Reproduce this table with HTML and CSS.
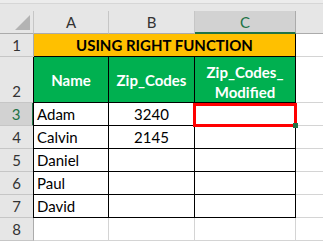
FILE: index.html
```html
<!DOCTYPE html>
<html>
<head>
<meta charset="utf-8">
<link rel="stylesheet" href="styles.css">
</head>
<body>
<div class="sheet">
  <div class="topbar"></div>

  <div class="corner"><span class="tri"></span></div>
  <div class="ch">A</div>
  <div class="ch">B</div>
  <div class="ch sel">C</div>
  <div class="ch"></div>

  <div class="rh">1</div>
  <div class="title">USING RIGHT FUNCTION</div>
  <div class="cell"></div>

  <div class="rh bottom">2</div>
  <div class="hd first">Name</div>
  <div class="hd">Zip_Codes</div>
  <div class="hd wrap">Zip_Codes_<br>Modified</div>
  <div class="cell"></div>

  <div class="rh sel">3</div>
  <div class="td first">Adam</div>
  <div class="td num">3240</div>
  <div class="td active"><span class="selbox"></span><span class="handle"></span></div>
  <div class="cell"></div>

  <div class="rh">4</div>
  <div class="td first">Calvin</div>
  <div class="td num">2145</div>
  <div class="td"></div>
  <div class="cell"></div>

  <div class="rh">5</div>
  <div class="td first">Daniel</div>
  <div class="td num"></div>
  <div class="td"></div>
  <div class="cell"></div>

  <div class="rh">6</div>
  <div class="td first">Paul</div>
  <div class="td num"></div>
  <div class="td"></div>
  <div class="cell"></div>

  <div class="rh">7</div>
  <div class="td first">David</div>
  <div class="td num"></div>
  <div class="td"></div>
  <div class="cell"></div>

  <div class="rh">8</div>
  <div class="cell"></div>
  <div class="cell"></div>
  <div class="cell"></div>
  <div class="cell"></div>
</div>
</body>
</html>
```

FILE: styles.css
```css
* { box-sizing: border-box; }
html, body { margin: 0; padding: 0; background: #ffffff; }
body { width: 323px; height: 242px; overflow: hidden; }

.sheet {
  display: grid;
  grid-template-columns: 34px 75px 86px 101px 28px;
  grid-template-rows: 11px 23px 23px 46px repeat(6, 23px);
  font-family: Lato, "Noto Sans", sans-serif;
  font-size: 15px;
  color: #000;
  line-height: 22px;
}

.topbar {
  grid-column: 1 / -1;
  background: #e6e6e6;
  border-top: 3px solid #ececec;
  box-shadow: inset 0 1px 0 #d6d6d6;
}

.corner {
  position: relative;
  background: #e6e6e6;
  border-right: 1px solid #c6c6c6;
  border-bottom: 1px solid #ababab;
}
.tri {
  position: absolute;
  right: 3px;
  bottom: 3px;
  width: 0;
  height: 0;
  border-left: 15px solid transparent;
  border-bottom: 15px solid #b3b3b3;
}

.ch {
  background: #e6e6e6;
  color: #333;
  text-align: center;
  border-right: 1px solid #c6c6c6;
  border-bottom: 1px solid #ababab;
}
.ch.sel {
  background: #d2d2d2;
  color: #217346;
  border-bottom: 2px solid #217346;
  border-right: 1px solid #ababab;
}

.rh {
  background: #e6e6e6;
  color: #333;
  text-align: center;
  border-right: 1px solid #ababab;
  border-bottom: 1px solid #c6c6c6;
}
.rh.bottom {
  display: flex;
  align-items: flex-end;
  justify-content: center;
}
.rh.sel {
  background: #d2d2d2;
  color: #217346;
  border-right: 2px solid #217346;
}

.cell {
  border-right: 1px solid #d4d4d4;
  border-bottom: 1px solid #d4d4d4;
}

.title {
  grid-column: span 3;
  background: #ffc000;
  font-weight: bold;
  text-align: center;
  border-right: 1px solid #000;
  border-bottom: 1px solid #000;
}

.hd {
  background: #00b050;
  color: #ffffff;
  font-weight: bold;
  display: flex;
  align-items: center;
  justify-content: center;
  text-align: center;
  border-right: 1px solid #000;
  border-bottom: 1px solid #000;
  padding-top: 1px;
}
.hd.wrap {
  line-height: 20px;
  padding-top: 4px;
}

.td {
  border-right: 1px solid #000;
  border-bottom: 1px solid #000;
  padding-left: 3px;
}
.first { box-shadow: -1px 0 0 #000; }
.td.num { text-align: center; padding-left: 0; }

.td.active { position: relative; }
.selbox {
  position: absolute;
  left: -2px;
  top: 0;
  width: 104px;
  height: 24px;
  border: 3px solid #ff0000;
}
.handle {
  position: absolute;
  left: 98px;
  top: 20px;
  width: 5px;
  height: 5px;
  background: #217346;
}
```
